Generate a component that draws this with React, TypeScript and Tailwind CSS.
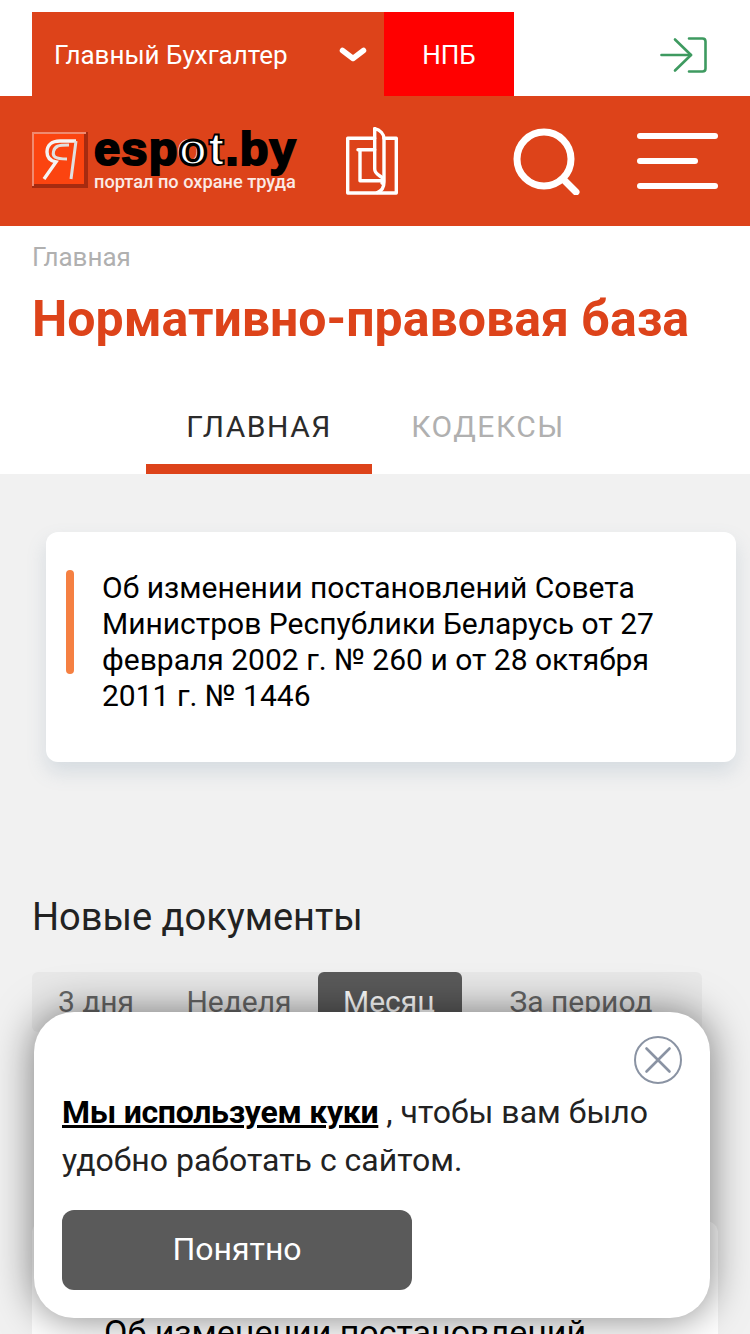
import React from "react";

function DocIcon() {
  return (
    <svg width="52" height="68" viewBox="0 0 52 68" fill="none" stroke="#fff" strokeWidth="3.4" strokeLinejoin="round" strokeLinecap="round" className="shrink-0">
      <path d="M28.700 11.300H1.700V66H50.300V11.300H38" />
      <path d="M12 22.700H28.700" />
      <path d="M14 22.700V53.700H36" />
      <path d="M28.700 1.700C34 3 38 7 38 12V55C38 60 35.500 64 31.300 65.500" />
      <path d="M28.700 1.700V42C28.700 47 33 48 36 50.500C38 52.500 38 54 36 56" />
    </svg>
  );
}

function LogoMark() {
  return (
    <svg width="56" height="56" viewBox="0 0 56 56" className="shrink-0">
      <rect x="0" y="0" width="56" height="56" fill="#a62b10" />
      <rect x="0" y="0" width="54" height="2" fill="#f08a70" />
      <rect x="0" y="0" width="2" height="54" fill="#f08a70" />
      <rect x="2" y="2" width="50" height="50" fill="#fb4410" />
      <path d="M44 9H28C19 9 15 14 15 20C15 26 19 29 24 30L12 47" fill="none" stroke="#f4f4f4" strokeWidth="3.4" />
      <path d="M44 9L39 47M37 13C33 13 28 13 26 14C21 16 20 23 23 25C26 27 31 27 35 27" fill="none" stroke="#e0e0e0" strokeWidth="3" />
    </svg>
  );
}

export default function App() {
  return (
    <div className="relative h-[1334px] w-[750px] overflow-hidden bg-[#f1f1f1] font-['Roboto',sans-serif]">
      <div className="flex h-[96px] items-end justify-between bg-white pr-[43px] pl-8">
        <div className="flex h-[84px]">
          <div className="flex w-[352px] items-center bg-[#dd431a] pt-[2px] pr-[17px] pl-[22px] text-[26px] text-white">
            <span className="flex-1">Главный Бухгалтер</span>
            <svg width="28" height="16" viewBox="0 0 28 16" fill="none" stroke="#fff" strokeWidth="5.5" strokeLinecap="round" strokeLinejoin="round">
              <path d="M3.500 3.500L14 11.500L24.500 3.500" />
            </svg>
          </div>
          <div className="flex w-[130px] items-center justify-center bg-[#ff0000] pt-[2px] text-[26px] text-white">НПБ</div>
        </div>
        <svg width="47" height="36" viewBox="0 0 47 36" fill="none" stroke="#3e9a60" strokeWidth="2.6" strokeLinecap="round" strokeLinejoin="round" className="mb-[23px]">
          <path d="M1.500 18H31" />
          <path d="M15 2.500L31 18L15 33.500" />
          <path d="M29 1.500H42.500C44.500 1.500 45.500 2.500 45.500 4.500V31.500C45.500 33.500 44.500 34.500 42.500 34.500H29" />
        </svg>
      </div>

      <div className="flex h-[130px] items-center bg-[#dd431a] pr-8 pl-8">
        <div className="mt-[2px] flex w-[268px] shrink-0 items-start gap-[6px]">
          <LogoMark />
          <div className="flex flex-col">
            <div className="mt-[-5px] h-[44px] whitespace-nowrap font-['Liberation_Sans',sans-serif] text-[47px] leading-[44px] font-bold tracking-[1.2px] text-black [-webkit-text-stroke:2.2px_#000]">
              esp
              <span className="text-white [-webkit-text-stroke:3.2px_#000] [text-shadow:-2px_-1px_0_#fff]">o</span>
              <span className="text-white [-webkit-text-stroke:1.8px_#000]">t</span>
              .by
            </div>
            <div className="mt-[1px] whitespace-nowrap text-[18.2px] leading-[20px] font-medium text-[#fbeae5]">портал по охране труда</div>
          </div>
        </div>
        <div className="ml-[46px] flex">
          <DocIcon />
        </div>
        <svg width="70" height="68" viewBox="0 0 70 68" fill="none" stroke="#fff" strokeLinecap="round" className="ml-[114px] shrink-0">
          <circle cx="32" cy="32" r="27" strokeWidth="7" />
          <path d="M52 53L64 65" strokeWidth="7" />
        </svg>
        <div className="ml-[55px] flex w-[81px] shrink-0 flex-col items-start gap-[19px]">
          <div className="h-[6px] w-[81px] rounded-full bg-white" />
          <div className="h-[6px] w-[61px] rounded-full bg-white" />
          <div className="h-[6px] w-[81px] rounded-full bg-white" />
        </div>
      </div>

      <div className="h-[248px] bg-white pl-8">
        <div className="pt-[17px] text-[26px] leading-[29px] text-[#b0b0b0]">Главная</div>
        <h1 className="mt-[18px] text-[50px] leading-[58px] font-bold whitespace-nowrap text-[#dd431a]">Нормативно-правовая база</h1>
        <div className="mt-[26px] ml-[114px] flex">
          <div className="flex h-[100px] w-[226px] items-start justify-center border-b-[10px] border-[#dd431a] pt-[36px] text-[30px] leading-[33px] tracking-[1.5px] text-[#2b2b2b]">ГЛАВНАЯ</div>
          <div className="flex h-[100px] w-[232px] items-start justify-center pt-[36px] text-[30px] leading-[33px] tracking-[1.5px] text-[#b0b0b0]">КОДЕКСЫ</div>
        </div>
      </div>

      <div className="pl-8">
        <div className="mt-[58px] ml-[14px] flex h-[230px] w-[690px] gap-[28px] rounded-[12px] bg-white pt-[38px] pl-[20px] shadow-[0_10px_20px_rgba(90,120,150,0.18)]">
          <div className="h-[104px] w-[8px] shrink-0 rounded-full bg-[#f58042]" />
          <p className="w-[590px] text-[30px] leading-[36px] text-black">
            Об изменении постановлений Совета Министров Республики Беларусь от 27 февраля 2002 г. № 260 и от 28 октября 2011 г. № 1446
          </p>
        </div>
        <h2 className="mt-[133px] text-[38px] leading-[44px] text-[#222]">Новые документы</h2>
        <div className="mt-[33px] flex h-[60px] w-[670px] items-start rounded-[6px] bg-[#e8e8e8] text-[30px] text-[#666]">
          <div className="flex h-[60px] w-[128px] items-center justify-center pb-[2px]">3 дня</div>
          <div className="flex h-[60px] w-[158px] items-center justify-center pb-[2px]">Неделя</div>
          <div className="flex h-[60px] w-[144px] items-center justify-center rounded-[6px] bg-[#5a5a5a] pr-[2px] pb-[2px] text-white">Месяц</div>
          <div className="flex h-[60px] flex-1 items-center justify-center pr-[2px] pb-[2px]">За период</div>
        </div>
        <div className="mt-[189px] h-[140px] w-[686px] rounded-t-[12px] bg-white pt-[93px] pl-[72px] text-[34px] leading-[36px] whitespace-nowrap text-black">
          Об изменении постановлений
        </div>
      </div>

      <div className="absolute top-[1012px] left-[34px] h-[306px] w-[676px] rounded-[40px] bg-white pl-[28px] shadow-[0_0_40px_rgba(0,0,0,0.5)]">
        <svg width="50" height="50" viewBox="0 0 50 50" fill="none" stroke="#8a93a3" strokeWidth="2" strokeLinecap="round" className="absolute top-[23px] right-[27px]">
          <circle cx="25" cy="25" r="23" />
          <path d="M13.500 13.500L36.500 36.500M36.500 13.500L13.500 36.500" strokeWidth="2.6" />
        </svg>
        <p className="pt-[76px] text-[32px] leading-[48px] whitespace-nowrap text-[#222]">
          <span className="font-bold tracking-[-0.28px] text-black underline">Мы используем куки</span> , чтобы вам было
          <br />
          удобно работать с сайтом.
        </p>
        <div className="mt-[26px] flex h-[80px] w-[350px] items-center justify-center rounded-[12px] bg-[#5a5a5a] pb-[2px] text-[32px] text-white">Понятно</div>
      </div>
    </div>
  );
}
